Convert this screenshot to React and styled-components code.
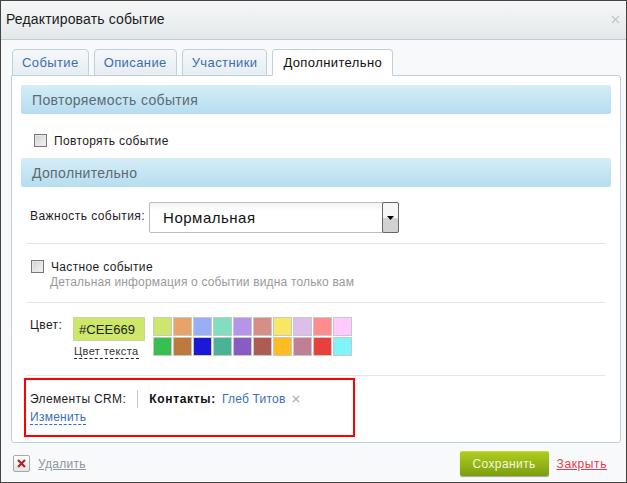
import React from 'react';
import styled, { createGlobalStyle } from 'styled-components';

const GlobalStyle = createGlobalStyle`
  html, body {
    margin: 0;
    padding: 0;
    background: #fff;
  }
  * {
    box-sizing: border-box;
  }
`;

const Win = styled.div`
  width: 627px;
  height: 483px;
  display: flex;
  flex-direction: column;
  background: #f8f9fb;
  border: 1px solid #444;
  font-family: "Liberation Sans", Arial, sans-serif;
  color: #000;
  overflow: hidden;
`;

const TitleBar = styled.div`
  height: 39px;
  flex: none;
  display: flex;
  align-items: center;
  justify-content: space-between;
  padding: 0 6px 2px 5px;
  background: linear-gradient(#f6f8f8, #e2e8ea);
  border-bottom: 1px solid #bfccd3;
`;

const Title = styled.div`
  font-size: 14px;
  letter-spacing: 0.15px;
  color: #1c1c1c;
`;

const CloseIcon = styled.svg`
  width: 9px;
  height: 9px;
  stroke: #c3c6c8;
  stroke-width: 1.2;
`;

const Body = styled.div`
  flex: 1;
  display: flex;
  flex-direction: column;
  padding: 9px 5px 0 10px;
`;

const Tabs = styled.div`
  display: flex;
  gap: 5px;
  height: 27px;
  padding-left: 1px;
  margin-bottom: -1px;
  position: relative;
  z-index: 1;
`;

const Tab = styled.div`
  height: 27px;
  padding: 0 ${p => (p.$active ? '10px' : '9px')};
  display: flex;
  align-items: center;
  font-size: 13px;
  letter-spacing: 0.4px;
  border: 1px solid #bed0d8;
  border-radius: 4px 4px 0 0;
  color: ${p => (p.$active ? '#111' : '#3c6fa8')};
  background: ${p => (p.$active ? '#fff' : 'linear-gradient(#f6f8fb, #e6edf3)')};
  border-bottom-color: ${p => (p.$active ? '#fff' : '#bed0d8')};
`;

const Panel = styled.div`
  width: 610px;
  height: 368px;
  flex: none;
  background: #fff;
  border: 1px solid #bed0d8;
  border-radius: 0 3px 3px 3px;
  padding: 9px 9px 0 9px;
`;

const SectionHead = styled.div`
  height: 29px;
  display: flex;
  align-items: center;
  padding-left: 11px;
  font-size: 14px;
  letter-spacing: 0.35px;
  color: #5d6a72;
  border-radius: 2px;
  background: linear-gradient(#d5edf7, #b6ddf0);
`;

const RepeatRow = styled.div`
  height: 44px;
  display: flex;
  align-items: center;
  gap: 7px;
  padding: 9px 0 0 13px;
  font-size: 12px;
  letter-spacing: 0.35px;
  color: #1c1c1c;
`;

const Check = styled.span`
  display: block;
  flex: none;
  width: 13px;
  height: 13px;
  border: 1px solid #777;
  background: linear-gradient(135deg, #cfcfcf, #f6f6f6);
  box-shadow: inset 0 0 0 1px #e8e8e8;
`;

const ImportanceRow = styled.div`
  height: 57px;
  margin: 0 6px 0 5px;
  padding: 15px 0 0 4px;
  display: flex;
  align-items: flex-start;
  gap: 4px;
  border-bottom: 1px solid #e6e6e6;
`;

const FieldLabel = styled.div`
  font-size: 12px;
  letter-spacing: 0.45px;
  line-height: 28px;
  color: #1c1c1c;
`;

const SelectBox = styled.div`
  width: 250px;
  height: 31px;
  display: flex;
  border: 1px solid #bcbcbc;
  border-radius: 2px;
  background: linear-gradient(#f4f4f4, #fff 8px);
`;

const SelectValue = styled.div`
  flex: 1;
  padding-left: 13px;
  line-height: 29px;
  font-size: 15px;
  letter-spacing: 0.5px;
  color: #111;
`;

const SelectButton = styled.div`
  width: 17px;
  margin: -1px -1px -1px 0;
  display: flex;
  align-items: center;
  justify-content: center;
  border: 1px solid #666;
  border-radius: 2px;
  background: linear-gradient(#f6f6f6 50%, #d2d2d2 50%);
`;

const Arrow = styled.svg`
  width: 7px;
  height: 4px;
  fill: #000;
`;

const PrivateRow = styled.div`
  height: 59px;
  margin: 0 6px 0 5px;
  padding: 16px 0 0 5px;
  display: flex;
  gap: 7px;
  border-bottom: 1px solid #e6e6e6;
`;

const PrivateTitle = styled.div`
  font-size: 12px;
  letter-spacing: 0.35px;
  line-height: 15px;
  color: #1c1c1c;
`;

const PrivateHint = styled.div`
  margin-left: -1px;
  font-size: 12px;
  letter-spacing: 0.16px;
  line-height: 15px;
  color: #9a9a9a;
`;

const ColorRow = styled.div`
  height: 73px;
  margin: 0 6px 0 5px;
  padding: 14px 0 0 4px;
  display: flex;
  border-bottom: 1px solid #e6e6e6;
`;

const ColorLabel = styled.div`
  width: 43px;
  font-size: 12px;
  letter-spacing: 0.4px;
  line-height: 17px;
  color: #1c1c1c;
`;

const ColorField = styled.div`
  width: 72px;
  margin-right: 8px;
`;

const ColorInput = styled.div`
  height: 24px;
  padding-left: 5px;
  line-height: 23px;
  font-size: 13px;
  letter-spacing: 0.05px;
  color: #222;
  background: #cee669;
  border: 1px solid #c9d5a0;
`;

const TextColorLink = styled.span`
  display: inline-block;
  margin: 2px 0 0 1px;
  font-size: 11px;
  letter-spacing: 0.4px;
  line-height: 14px;
  color: #333;
  border-bottom: 1px dashed #222;
`;

const Swatches = styled.div`
  display: grid;
  grid-template-columns: repeat(10, 19px);
  grid-auto-rows: 19px;
  gap: 1px;
`;

const Swatch = styled.div`
  background: ${p => p.$color};
  border: 1px solid #c8c8c8;
`;

const CrmBox = styled.div`
  width: 331px;
  height: 59px;
  margin: 2px 0 0 3px;
  padding: 10px 0 0 4px;
  border: 2px solid #f00;
  font-size: 12px;
  letter-spacing: 0.35px;
`;

const CrmLine = styled.div`
  display: flex;
  align-items: center;
  height: 18px;
  color: #1c1c1c;
`;

const CrmDivider = styled.span`
  width: 1px;
  height: 18px;
  margin: 0 11px 0 11px;
  background: #c8c8c8;
`;

const ContactsLabel = styled.b`
  margin-right: 6px;
  letter-spacing: 0.7px;
  color: #111;
`;

const ContactName = styled.span`
  letter-spacing: 0.2px;
  color: #3a6fb5;
`;

const RemoveIcon = styled.svg`
  width: 8px;
  height: 8px;
  margin-left: 6px;
  stroke: #aeb2b6;
  stroke-width: 1.4;
`;

const ChangeLink = styled.span`
  display: inline-block;
  margin-top: 2px;
  line-height: 14px;
  letter-spacing: 0.25px;
  color: #3a6fb5;
  border-bottom: 1px dashed #1f74c9;
`;

const Footer = styled.div`
  flex: 1;
  display: flex;
  align-items: center;
  justify-content: space-between;
  padding: 2px 14px 0 2px;
  font-size: 12px;
`;

const FooterGroup = styled.div`
  display: flex;
  align-items: center;
`;

const DeleteButton = styled.div`
  width: 17px;
  height: 17px;
  margin-right: 8px;
  display: flex;
  align-items: center;
  justify-content: center;
  border: 1px solid #a9a9a9;
  border-radius: 2px;
  background: linear-gradient(#fff, #e4e4e4);
`;

const DeleteMark = styled.svg`
  width: 9px;
  height: 9px;
  stroke: #a8232a;
  stroke-width: 2.2;
`;

const DeleteLink = styled.span`
  color: #8b97a1;
  letter-spacing: 0.3px;
  text-decoration: underline;
`;

const SaveButton = styled.div`
  width: 89px;
  height: 25px;
  margin-right: 8px;
  display: flex;
  align-items: center;
  justify-content: center;
  color: #f3f8dc;
  letter-spacing: 0.4px;
  border-radius: 2px;
  background: linear-gradient(#b0cc1d, #7b9e10);
  border-top: 1px solid #c4dc3a;
  box-shadow: 0 1px 1px rgba(0, 0, 0, 0.35);
`;

const CloseLink = styled.span`
  color: #e8394a;
  letter-spacing: 0.6px;
  text-decoration: underline;
`;

const tabs = ['Событие', 'Описание', 'Участники', 'Дополнительно'];

const swatches = [
  '#cee669', '#e6a469', '#98aff5', '#7fdfc0', '#b595ea', '#d68f85', '#f7e763', '#dcbfe8', '#ff8d8d', '#ffcbff',
  '#38bf52', '#bd7a3a', '#1a1ad6', '#4ab296', '#885cc4', '#ad5c52', '#ffbb22', '#c07f93', '#e8403a', '#7ff5fb',
];

const App = () => (
  <>
    <GlobalStyle />
    <Win>
      <TitleBar>
        <Title>Редактировать событие</Title>
        <CloseIcon viewBox="0 0 9 9">
          <path d="M1 1l7 7M8 1l-7 7" />
        </CloseIcon>
      </TitleBar>
      <Body>
        <Tabs>
          {tabs.map((t, i) => (
            <Tab key={t} $active={i === 3}>{t}</Tab>
          ))}
        </Tabs>
        <Panel>
          <SectionHead>Повторяемость события</SectionHead>
          <RepeatRow>
            <Check />
            Повторять событие
          </RepeatRow>
          <SectionHead>Дополнительно</SectionHead>
          <ImportanceRow>
            <FieldLabel>Важность события:</FieldLabel>
            <SelectBox>
              <SelectValue>Нормальная</SelectValue>
              <SelectButton>
                <Arrow viewBox="0 0 7 4">
                  <path d="M0 0h7L3.5 4z" />
                </Arrow>
              </SelectButton>
            </SelectBox>
          </ImportanceRow>
          <PrivateRow>
            <Check />
            <div>
              <PrivateTitle>Частное событие</PrivateTitle>
              <PrivateHint>Детальная информация о событии видна только вам</PrivateHint>
            </div>
          </PrivateRow>
          <ColorRow>
            <ColorLabel>Цвет:</ColorLabel>
            <ColorField>
              <ColorInput>#CEE669</ColorInput>
              <TextColorLink>Цвет текста</TextColorLink>
            </ColorField>
            <Swatches>
              {swatches.map(c => (
                <Swatch key={c} $color={c} />
              ))}
            </Swatches>
          </ColorRow>
          <CrmBox>
            <CrmLine>
              Элементы CRM:
              <CrmDivider />
              <ContactsLabel>Контакты:</ContactsLabel>
              <ContactName>Глеб Титов</ContactName>
              <RemoveIcon viewBox="0 0 8 8">
                <path d="M1 1l6 6M7 1l-6 6" />
              </RemoveIcon>
            </CrmLine>
            <ChangeLink>Изменить</ChangeLink>
          </CrmBox>
        </Panel>
        <Footer>
          <FooterGroup>
            <DeleteButton>
              <DeleteMark viewBox="0 0 9 9">
                <path d="M1 1l7 7M8 1l-7 7" />
              </DeleteMark>
            </DeleteButton>
            <DeleteLink>Удалить</DeleteLink>
          </FooterGroup>
          <FooterGroup>
            <SaveButton>Сохранить</SaveButton>
            <CloseLink>Закрыть</CloseLink>
          </FooterGroup>
        </Footer>
      </Body>
    </Win>
  </>
);

export default App;
